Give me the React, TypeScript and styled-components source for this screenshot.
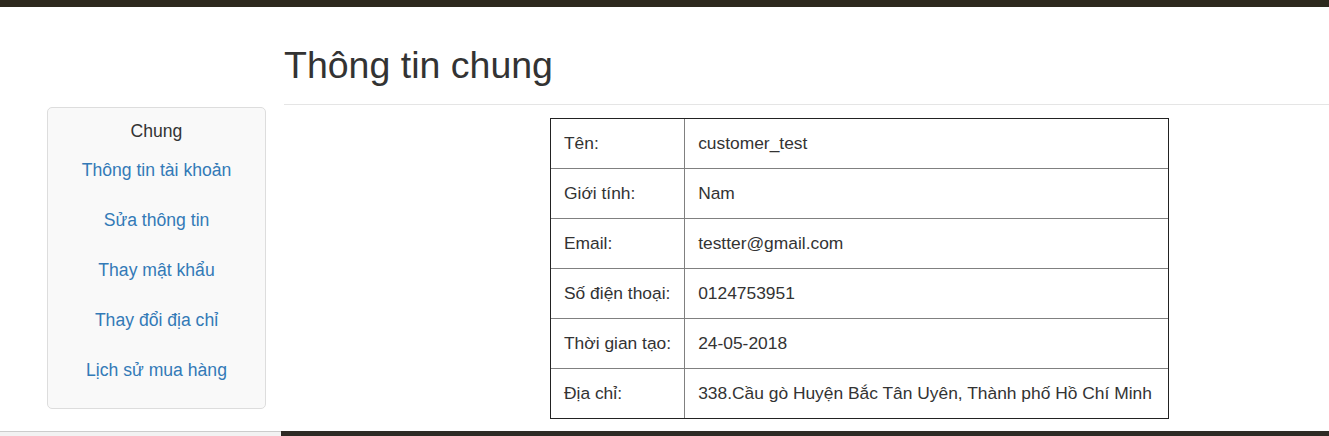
import React from "react";
import styled, { createGlobalStyle } from "styled-components";

const Global = createGlobalStyle`
  html, body { margin: 0; padding: 0; background: #fff; }
  body { font-family: "Liberation Sans", Arial, sans-serif; color: #333; overflow: hidden; }
  table { font-family: "Liberation Sans", Arial, sans-serif; }
`;

const TopBar = styled.div`
  height: 7px;
  background: #2d291e;
`;

const Layout = styled.div`
  display: flex;
  align-items: flex-start;
  padding-left: 47px;
  gap: 18px;
`;

const Sidebar = styled.nav`
  margin-top: 100px;
  width: 219px;
  box-sizing: border-box;
  background: #f9f9f9;
  border: 1px solid #dddddd;
  border-radius: 5px;
  padding: 12px 0 13px;
  display: flex;
  flex-direction: column;
  align-items: center;
`;

const SideTitle = styled.div`
  font-size: 17.6px;
  line-height: 22px;
  color: #333;
  margin-bottom: 3px;
`;

const SideLink = styled.a`
  display: block;
  font-size: 17.6px;
  line-height: 22px;
  padding: 14px 0;
  color: #337ab7;
  text-decoration: none;
  text-align: center;
`;

const Main = styled.main`
  flex: 1;
`;

const PageHeader = styled.div`
  border-bottom: 1px solid #e5e5e5;
  padding-bottom: 18px;
  margin-top: 38px;
`;

const Title = styled.h1`
  margin: 0;
  font-size: 37.5px;
  line-height: 41px;
  font-weight: 400;
  color: #333;
`;

const InfoTable = styled.table`
  margin: 13px 0 0 266px;
  border-collapse: separate;
  border-spacing: 0;
  border: 1px solid #222;
  font-family: "Liberation Sans", Arial, sans-serif;
  font-size: 17.4px;
`;

const Cell = styled.td<{ $label?: boolean; $last?: boolean }>`
  height: 49px;
  padding: 0 13px;
  box-sizing: content-box;
  vertical-align: middle;
  color: #333;
  white-space: nowrap;
  border-bottom: ${(p) => (p.$last ? "none" : "1px solid #808080")};
  border-right: ${(p) => (p.$label ? "1px solid #808080" : "none")};
  width: ${(p) => (p.$label ? "107px" : "457px")};
`;

const Footer = styled.div`
  display: flex;
  margin-top: 12px;
  height: 6px;
`;

const FooterLeft = styled.div`
  width: 281px;
  box-sizing: border-box;
  background: #f2f2f2;
  border-top: 1px solid #cccccc;
`;

const FooterRight = styled.div`
  flex: 1;
  background: #2e2b25;
`;

const links = [
  "Thông tin tài khoản",
  "Sửa thông tin",
  "Thay mật khẩu",
  "Thay đổi địa chỉ",
  "Lịch sử mua hàng",
];

const rows: [string, string][] = [
  ["Tên:", "customer_test"],
  ["Giới tính:", "Nam"],
  ["Email:", "testter@gmail.com"],
  ["Số điện thoại:", "0124753951"],
  ["Thời gian tạo:", "24-05-2018"],
  ["Địa chỉ:", "338.Cầu gò Huyện Bắc Tân Uyên, Thành phố Hồ Chí Minh"],
];

export default function App() {
  return (
    <>
      <Global />
      <TopBar />
      <Layout>
        <Sidebar>
          <SideTitle>Chung</SideTitle>
          {links.map((l) => (
            <SideLink key={l} href="#">
              {l}
            </SideLink>
          ))}
        </Sidebar>
        <Main>
          <PageHeader>
            <Title>Thông tin chung</Title>
          </PageHeader>
          <InfoTable>
            <tbody>
              {rows.map(([k, v], i) => (
                <tr key={k}>
                  <Cell $label $last={i === rows.length - 1}>
                    {k}
                  </Cell>
                  <Cell $last={i === rows.length - 1}>{v}</Cell>
                </tr>
              ))}
            </tbody>
          </InfoTable>
        </Main>
      </Layout>
      <Footer>
        <FooterLeft />
        <FooterRight />
      </Footer>
    </>
  );
}
